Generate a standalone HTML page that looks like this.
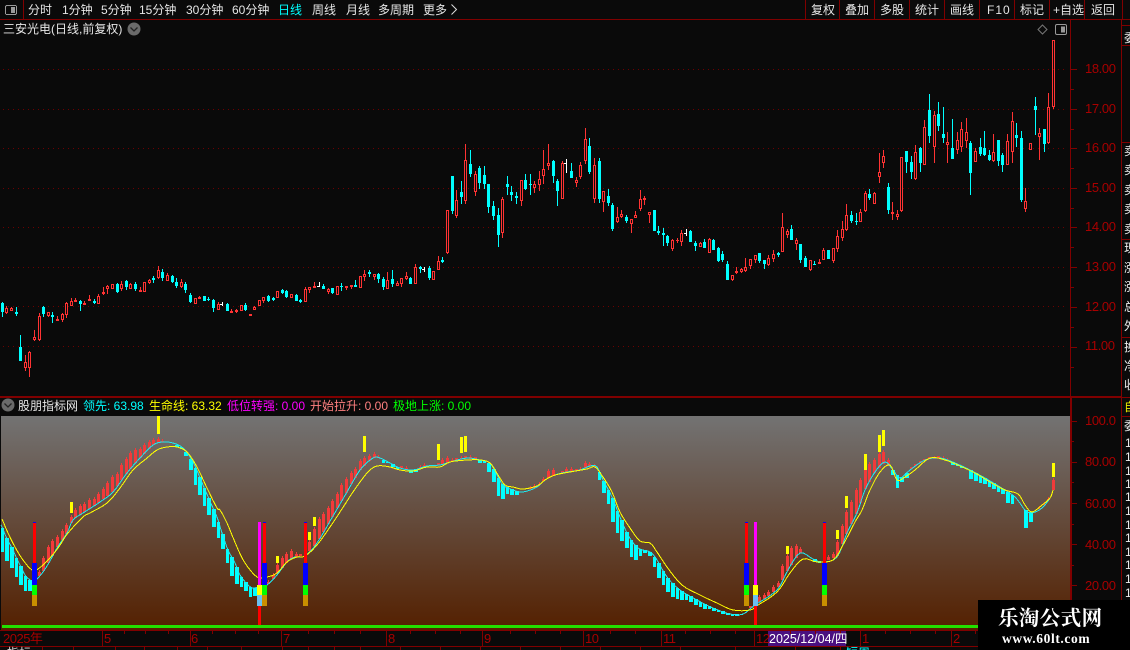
<!DOCTYPE html>
<html lang="zh">
<head>
<meta charset="utf-8">
<title>三安光电</title>
<style>
html,body{margin:0;padding:0;background:#0a0a0a;}
#p{position:relative;width:1130px;height:650px;overflow:hidden;background:#0a0a0a;font-family:"Liberation Sans","WenQuanYi Zen Hei","Noto Sans CJK SC",sans-serif;font-size:12px;color:#e6e6e6;}
#p svg{position:absolute;left:0;top:0;}
#p span{position:absolute;white-space:nowrap;line-height:14px;}
.ax{color:#a80000;font-size:13px;letter-spacing:-.4px;left:1085px;}
.rc{left:1124px;color:#eee;width:6px;overflow:hidden;}
.t{color:#a80000;top:632px;font-size:13px;letter-spacing:-.5px;}
.tb{top:3px;}
</style>
</head>
<body>
<div id="p">
<svg width="1130" height="650" viewBox="0 0 1130 650" shape-rendering="crispEdges">
<defs>
<linearGradient id="g" x1="0" y1="0" x2="0" y2="1"><stop offset="0" stop-color="#737373"/><stop offset="1" stop-color="#542000"/></linearGradient>
</defs>
<rect x="1" y="416" width="1069" height="214" fill="url(#g)"/>
<g fill="#800000" id="frame">
<rect x="0" y="19" width="1130" height="1"/>
<rect x="23" y="0" width="1" height="19"/>
<rect x="805" y="0" width="1" height="19"/><rect x="839" y="0" width="1" height="19"/><rect x="874" y="0" width="1" height="19"/><rect x="909" y="0" width="1" height="19"/><rect x="944" y="0" width="1" height="19"/><rect x="979" y="0" width="1" height="19"/><rect x="1014" y="0" width="1" height="19"/><rect x="1049" y="0" width="1" height="19"/><rect x="1084" y="0" width="1" height="19"/><rect x="1122" y="0" width="1" height="19"/>
<rect x="1070" y="20" width="1" height="610"/>
<rect x="1121" y="20" width="1" height="610"/>
<rect x="0" y="396" width="1122" height="2"/>
<rect x="1070" y="396" width="2" height="234"/>
<rect x="1122" y="25" width="8" height="1"/><rect x="1122" y="45" width="8" height="1"/><rect x="1122" y="142" width="8" height="1"/><rect x="1122" y="239" width="8" height="1"/><rect x="1122" y="337" width="8" height="1"/><rect x="1122" y="397" width="8" height="1"/><rect x="1122" y="416" width="8" height="1"/>
<rect x="0" y="630" width="1070" height="1"/>
<rect x="0" y="646" width="1130" height="1"/>
</g>
<g id="grid" stroke="#6e0000" stroke-width="1" stroke-dasharray="1 4">
<path d="M3 69.5H1068M3 109.5H1068M3 148.5H1068M3 188.5H1068M3 227.5H1068M3 267.5H1068M3 306.5H1068M3 346.5H1068" fill="none"/>
</g>
<path id="ticks" fill="#800000" d=""/>
<path id="redC" fill="#ff3333" fill-rule="evenodd" d=""/>
<path id="cyanC" fill="#00ffff" d=""/>
<path id="whiteC" fill="#ffffff" d=""/>
<path id="barR" fill="#f23a3a" d=""/>
<path id="barC" fill="#00ffff" d=""/>
<polyline id="lc" fill="none" stroke="#1fe8f0" stroke-width="1" points=""/>
<polyline id="ly" fill="none" stroke="#ffff00" stroke-width="1" points=""/>
<path id="mk" fill="#ffff00" d=""/>
<g id="cols"></g>
<rect x="2" y="625" width="976" height="3" fill="#22e000"/>
<rect x="768" y="631" width="78" height="15" fill="#4a1080"/>
<path id="tt" fill="#800000" d=""/>
<!-- toolbar icon -->
<rect x="5.5" y="5.5" width="11" height="9" rx="1.5" fill="none" stroke="#9a9a9a"/>
<rect x="11" y="7" width="4" height="6" fill="#9a9a9a"/>
<!-- top right icons -->
<g shape-rendering="auto">
<path d="M1042.5 25l4.5 4.5-4.5 4.5-4.5-4.5z" fill="none" stroke="#777"/>
<rect x="1055.5" y="24.5" width="11" height="10" rx="1.5" fill="none" stroke="#999"/>
<rect x="1061" y="26.5" width="4" height="6" fill="#999"/>
<circle cx="134" cy="29" r="6.5" fill="#6a6a6a"/>
<path d="M130.5 27.5l3.5 3.5 3.5-3.5" fill="none" stroke="#222" stroke-width="1.3"/>
<circle cx="8" cy="405" r="6.5" fill="#6a6a6a"/>
<path d="M4.5 403.5l3.5 3.5 3.5-3.5" fill="none" stroke="#222" stroke-width="1.3"/>
<path d="M451.5 4.5l5 5-5 5" fill="none" stroke="#ddd" stroke-width="1"/>
</g>
</svg>

<span class="tb" style="left:28px">分时</span>
<span class="tb" style="left:62px">1分钟</span>
<span class="tb" style="left:101px">5分钟</span>
<span class="tb" style="left:139px">15分钟</span>
<span class="tb" style="left:186px">30分钟</span>
<span class="tb" style="left:232px">60分钟</span>
<span class="tb" style="left:278px;color:#00ffff">日线</span>
<span class="tb" style="left:312px">周线</span>
<span class="tb" style="left:346px">月线</span>
<span class="tb" style="left:378px">多周期</span>
<span class="tb" style="left:423px">更多</span>
<span class="tb" style="left:811px">复权</span>
<span class="tb" style="left:845px">叠加</span>
<span class="tb" style="left:880px">多股</span>
<span class="tb" style="left:915px">统计</span>
<span class="tb" style="left:950px">画线</span>
<span class="tb" style="left:987px;letter-spacing:1px">F10</span>
<span class="tb" style="left:1020px">标记</span>
<span class="tb" style="left:1053px">+自选</span>
<span class="tb" style="left:1091px">返回</span>

<span style="left:3px;top:22px">三安光电(日线,前复权)</span>

<span class="ax" style="top:62px">18.00</span>
<span class="ax" style="top:102px">17.00</span>
<span class="ax" style="top:141px">16.00</span>
<span class="ax" style="top:181px">15.00</span>
<span class="ax" style="top:220px">14.00</span>
<span class="ax" style="top:260px">13.00</span>
<span class="ax" style="top:300px">12.00</span>
<span class="ax" style="top:339px">11.00</span>
<span class="ax" style="top:414px">100.0</span>
<span class="ax" style="top:455px">80.00</span>
<span class="ax" style="top:497px">60.00</span>
<span class="ax" style="top:538px">40.00</span>
<span class="ax" style="top:579px">20.00</span>

<span class="rc" style="top:31px">委</span>
<span class="rc" style="top:144px">卖</span><span class="rc" style="top:163px">卖</span><span class="rc" style="top:183px">卖</span><span class="rc" style="top:202px">卖</span><span class="rc" style="top:222px">卖</span>
<span class="rc" style="top:241px">现</span><span class="rc" style="top:261px">涨</span><span class="rc" style="top:280px">涨</span><span class="rc" style="top:300px">总</span><span class="rc" style="top:319px">外</span>
<span class="rc" style="top:340px">换</span><span class="rc" style="top:359px">净</span><span class="rc" style="top:378px">收</span>
<span class="rc" style="top:400px;color:#e6e600">自</span>
<span class="rc" style="top:419px">委</span>
<span class="rc" style="top:436px;left:1125px">1</span><span class="rc" style="top:450px;left:1125px">1</span><span class="rc" style="top:464px;left:1125px">1</span><span class="rc" style="top:477px;left:1125px">1</span><span class="rc" style="top:490px;left:1125px">1</span><span class="rc" style="top:504px;left:1125px">1</span><span class="rc" style="top:518px;left:1125px">1</span><span class="rc" style="top:531px;left:1125px">1</span><span class="rc" style="top:545px;left:1125px">1</span><span class="rc" style="top:558px;left:1125px">1</span><span class="rc" style="top:572px;left:1125px">1</span><span class="rc" style="top:586px;left:1125px">1</span>

<span style="left:18px;top:399px">股朋指标网</span>
<span style="left:83px;top:399px;color:#00ffff">领先: 63.98</span>
<span style="left:149px;top:399px;color:#ffff00">生命线: 63.32</span>
<span style="left:227px;top:399px;color:#ff00ff">低位转强: 0.00</span>
<span style="left:310px;top:399px;color:#ff8080">开始拉升: 0.00</span>
<span style="left:393px;top:399px;color:#00ff00">极地上涨: 0.00</span>

<span class="t" style="left:3px">2025年</span>
<span class="t" style="left:104px">5</span>
<span class="t" style="left:191px">6</span>
<span class="t" style="left:283px">7</span>
<span class="t" style="left:388px">8</span>
<span class="t" style="left:484px">9</span>
<span class="t" style="left:585px">10</span>
<span class="t" style="left:663px">11</span>
<span class="t" style="left:756px">12</span>
<span style="left:769px;top:632px;font-size:12.5px;color:#fff">2025/12/04/四</span>
<span class="t" style="left:862px">1</span>
<span class="t" style="left:953px">2</span>
<span style="left:7px;top:646px;color:#ddd;height:4px;overflow:hidden">指标</span>
<span style="left:50px;top:646px;color:#ddd;height:4px;overflow:hidden">一</span>
<span style="left:826px;top:646px;color:#ddd;height:4px;overflow:hidden">一</span>
<span style="left:846px;top:646px;color:#00ffff;height:4px;overflow:hidden">短周</span>

<div style="position:absolute;left:978px;top:600px;width:152px;height:50px;background:#000;"></div>
<span style="left:998px;top:608px;line-height:22px;font-family:'Liberation Serif','Noto Serif CJK SC',serif;font-weight:bold;font-size:20.5px;letter-spacing:.4px;color:#fff">乐淘公式网</span>
<span style="left:1002px;top:632px;line-height:14px;font-family:'Liberation Serif',serif;font-weight:bold;font-size:13.5px;letter-spacing:.6px;color:#fff">www.60lt.com</span>
</div>

<script>
(function(){
var segs=[
[280,0,"c66,70,96,110 r78,85,100,103 r82,84,92,94 c82,96,103,108 c165,201,243,243 r225,247,263,273 r213,216,263,291 r150,172,180,183 r98,108,179,183 c79,82,102,110 r96,97,108,111 c96,105,112,129 r108,117,122,122 r100,103,120,125 r66,70,104,113 r54,64,77,78 r54,60,65,65 c59,62,72,93 r63,69,75,75 r45,57,63,63 c57,62,69,72 r42,48,71,71 r21,37,43,45 r15,19,26,42 r12,13,26,27 c10,12,36,39 r3,12,26,33 c0,3,20,30 r8,12,26,28 c6,12,27,33 r21,29,35,36 r6,7,35,36 r-3,0,9,12 c-12,-6,0,9 r-42,-30,-6,-3 c-33,-24,-6,3 r-21,-15,3,3 c-15,-12,6,9 c-6,6,18,24 r-3,7,21,24 c6,12,30,39 c40,45,66,69 r54,54,72,72 r48,51,57,57 c48,48,63,63 c51,56,60,63 c57,60,84,96 r66,72,90,90 w66,72,72,78 c69,72,93,93 r87,93,99,99 r87,90,96,99 r75,76,93,93 c69,75,90,93 r102,102,108,108"],
[240,55,"r198,200,210,210 r180,181,197,197 r170,172,183,189 c165,168,184,186 c171,174,180,183 r153,154,173,173 c147,151,160,163 c150,153,171,175 r163,163,173,174 c162,165,183,183 c176,179,187,190 r141,148,185,185 r141,142,150,160 r126,139,143,144 w126,139,140,141 c132,138,147,147 r143,147,155,162 c143,144,158,162 r139,139,164,164 c130,137,142,153 r138,139,145,150 r135,136,141,147 c120,135,140,140 r109,109,143,143 r90,103,110,123 c90,96,103,111 r102,103,110,120 c98,102,117,129 c110,118,140,150 r96,121,147,147 c90,118,132,141 r124,129,137,138 r114,115,131,141 r96,109,117,120 c112,114,131,132 r72,82,131,131 c78,82,88,99 w81,88,88,96 c78,84,113,120 r94,94,119,119 r48,64,89,89 c52,59,66,70"],
[130,97,"r240,241,368,372 c138,138,243,252 r180,211,257,263 c153,186,201,222 r42,91,212,222 c60,102,132,141 r124,133,185,198 c109,114,159,177 c108,135,162,177 c162,162,231,249 c213,228,258,270 c234,255,315,351 r201,207,308,324 c138,162,171,195 c168,186,195,213 c186,198,204,222 r150,150,212,228 c132,150,177,180 c132,162,165,195 r153,162,174,189 r123,147,165,183 r60,117,138,162 r42,99,108,120 c90,93,138,159 c147,153,183,228 r93,99,207,207 w87,100,100,129 c99,123,144,144 r141,150,159,171 r96,105,141,147 r-6,27,93,102 c24,48,126,132 r84,105,207,219 c84,93,207,219 r183,183,216,246 c177,198,219,228 c219,225,297,303 r231,261,276,279 r240,252,261,264 c255,261,273,279 r267,267,282,309 r243,255,264,264 r180,207,237,243 r198,204,210,225 r246,246,255,279 c240,240,303,303 c288,303,309,315 c294,309,315,348 c315,318,339,348 r327,330,357,362 r324,330,333,339"],
[130,148,"r300,310,335,347 w297,310,310,318 c300,303,336,336 c333,339,348,362 r336,339,351,352 c327,336,354,354 r324,327,369,369 c327,330,360,360 c351,354,393,396 c363,372,390,396 c393,402,450,450 r435,435,450,453 r411,423,429,432 r414,417,426,429 r384,411,423,426 r387,387,408,417 r375,375,390,399 c369,369,393,399 c390,390,402,417 r375,384,405,408 r360,372,387,396 c366,369,375,381 r249,291,366,366 r297,303,315,324 c285,297,330,330 r324,330,342,360 c342,342,390,399 c378,384,411,411 r390,390,420,423 c393,402,405,405 r387,396,402,402 r354,360,390,390 c360,360,387,387 r354,354,393,399 r300,318,357,366 r273,297,324,333 r222,255,300,303 c243,255,273,279 c249,273,276,285 r237,246,276,276 r183,189,243,246 c177,192,204,210 r186,189,222,222"],
[90,191,"r189,246,261,279 r180,198,219,234 c279,291,360,372 r336,366,372,390 r360,372,381,390 r201,201,363,366 c183,183,216,249 c198,216,246,267 r165,186,267,270 c171,174,219,246 r90,111,225,225 c12,60,138,159 r63,75,171,219 c36,72,108,123 c51,132,144,159 r126,156,165,219 c87,174,207,207 r126,150,180,192 r96,117,171,186 r84,126,153,174 c153,159,249,315 r174,183,216,216 c144,171,192,198 c123,174,195,198 c180,195,210,213 r132,186,213,216 c150,150,213,228 c189,195,225,246 r132,153,225,225 r66,93,186,219 c99,135,144,171 c123,144,330,336 r294,333,357,366 r159,159,180,180 c21,48,60,135 r114,129,141,210 c117,117,162,186 r9,51,159,162 r-150,-150,51,57"]
];
function X(i){return Math.floor(2.33+4.59*i);}
var dR="",dC="",dW="";
segs.forEach(function(s){
 var off=s[0],i=s[1];
 s[2].split(" ").forEach(function(e){
  var ty=e[0],v=e.slice(1).split(",").map(function(n){return Math.round(off+parseFloat(n)/3);});
  var x=X(i),h=v[0],t=v[1],b=v[2],l=v[3],H=Math.max(b-t,1);
  var w=(t>h?"M"+x+" "+h+"h1v"+(t-h)+"h-1z":"")+(l>t+H?"M"+x+" "+(t+H)+"h1v"+(l-t-H)+"h-1z":"");
  if(ty=="r"){
    dR+="M"+(x-1)+" "+t+"h3v"+H+"h-3z";
    if(H>=3)dR+="M"+x+" "+(t+1)+"h1v"+(H-2)+"h-1z";
    dR+=w;
  }else if(ty=="c"){
    dC+="M"+(x-1)+" "+t+"h3v"+H+"h-3z"+w;
  }else{
    dW+="M"+x+" "+h+"h1v"+(l-h)+"h-1zM"+(x-2)+" "+t+"h2v1h-2z";
  }
  i++;
 });
});
document.getElementById("redC").setAttribute("d",dR);
document.getElementById("cyanC").setAttribute("d",dC);
document.getElementById("whiteC").setAttribute("d",dW);

var lead=[[1,525],[2,527],[7,539],[12,548],[16,557],[21,567],[25,575],[30,580],[34,582],[37,579],[43,572],[50,561],[57,548],[67,533],[73,520],[83,513],[100,502],[113,492],[127,473],[140,458],[153,445],[163,442],[173,443],[183,448],[193,462],[203,485],[213,508],[217,517],[222,533],[228,550],[235,563],[240,575],[248,585],[253,588],[258,587],[267,585],[277,575],[287,562],[295,557],[305,556],[317,543],[333,516],[347,492],[360,470],[373,458],[380,458],[390,463],[400,468],[413,470],[427,466],[440,465],[450,462],[467,458],[480,460],[490,463],[497,475],[503,485],[513,490],[523,492],[537,487],[545,480],[555,475],[567,472],[580,470],[590,466],[597,467],[603,480],[612,497],[620,517],[628,535],[638,548],[650,552],[657,560],[667,577],[680,590],[697,600],[713,608],[730,614],[743,614],[755,605],[777,590],[788,570],[800,553],[813,559],[823,562],[837,557],[847,533],[857,513],[865,490],[875,472],[885,462],[893,470],[900,478],[910,470],[925,460],[940,458],[955,463],[970,470],[985,478],[1000,487],[1015,497],[1025,510],[1032,513],[1042,508],[1050,498],[1053,490]];
var yel=[[2,519],[8,533],[15,547],[23,560],[32,570],[38,569],[48,560],[58,548],[68,533],[83,517],[90,513],[107,503],[120,488],[133,470],[147,458],[157,450],[167,447],[177,447],[187,452],[197,467],[207,488],[217,508],[220,510],[227,523],[237,547],[245,563],[257,577],[267,577],[277,573],[287,562],[297,557],[305,556],[317,545],[330,527],[340,512],[353,492],[367,473],[377,466],[390,467],[400,470],[413,471],[427,467],[440,467],[450,462],[467,460],[480,460],[490,463],[498,475],[505,485],[513,487],[523,489],[537,486],[545,480],[555,475],[570,472],[587,469],[595,467],[603,477],[612,492],[620,512],[630,528],[640,541],[650,543],[657,552],[667,567],[682,585],[700,595],[717,603],[733,610],[750,610],[758,605],[777,592],[790,573],[803,559],[817,562],[833,560],[843,545],[855,522],[862,510],[870,490],[880,472],[890,465],[897,480],[905,477],[915,470],[930,458],[945,460],[960,466],[975,473],[990,482],[1005,490],[1018,494],[1025,505],[1032,512],[1042,505],[1050,498],[1053,490]];
function smooth(a){
 var o=[];
 for(var k=0;k<a.length-1;k++){
  var p0=a[Math.max(k-1,0)],p1=a[k],p2=a[k+1],p3=a[Math.min(k+2,a.length-1)];
  for(var j=0;j<4;j++){
   var t=j/4,t2=t*t,t3=t2*t;
   o.push((.5*(2*p1[0]+(p2[0]-p0[0])*t+(2*p0[0]-5*p1[0]+4*p2[0]-p3[0])*t2+(3*p1[0]-p0[0]-3*p2[0]+p3[0])*t3)).toFixed(1)+","+(.5*(2*p1[1]+(p2[1]-p0[1])*t+(2*p0[1]-5*p1[1]+4*p2[1]-p3[1])*t2+(3*p1[1]-p0[1]-3*p2[1]+p3[1])*t3)).toFixed(1));
  }
 }
 o.push(a[a.length-1].join(","));
 return o.join(" ");
}
document.getElementById("lc").setAttribute("points",smooth(lead));
document.getElementById("ly").setAttribute("points",smooth(yel));
function ly(x){
 for(var k=0;k<lead.length-1;k++){
  if(x>=lead[k][0]&&x<=lead[k+1][0]){
   return lead[k][1]+(lead[k+1][1]-lead[k][1])*(x-lead[k][0])/(lead[k+1][0]-lead[k][0]);
  }
 }
 return lead[lead.length-1][1];
}
var R={8:570,9:556,10:545,11:539,12:535,13:529,14:523,15:515,16:508,17:504,18:502,19:498,20:497,21:492,22:487,23:481,24:475,25:472,26:463,27:457,28:451,29:448,30:447,31:443,32:440,33:438,34:437,35:439,58:580,59:573,60:563,61:556,62:552,63:549,64:552,65:554,67:540,68:527,69:517,70:512,71:506,72:499,73:492,74:483,75:477,76:471,77:467,78:459,79:456,80:454,81:452,82:455,87:466,88:466,91:465,92:463,95:463,96:458,97:456,98:458,99:458,100:456,101:456,102:455,103:457,115:486,116:484,117:482,118:477,119:469,120:468,121:474,122:471,123:467,124:467,125:469,126:467,127:461,128:462,129:464,163:606,165:595,166:593,167:590,168:585,169:581,170:564,171:554,172:546,173:544,174:547,180:555,181:552,182:540,183:524,184:510,185:500,186:488,187:478,188:467,189:462,190:458,191:452,192:450,193:458,198:467,199:464,200:461,201:459,202:457,203:456,204:456,205:456,206:458,226:506,227:502,228:497,229:478};
var C={0:552,1:561,2:568,3:577,4:585,5:591,6:591,38:447,39:449,40:456,41:470,42:485,43:495,44:506,45:515,46:527,47:538,48:549,49:563,50:576,51:584,52:587,53:591,54:597,55:596,83:463,84:463,85:467,86:469,89:473,90:472,104:463,105:463,106:472,107:482,108:496,109:499,110:494,111:495,112:495,113:492,114:491,130:480,131:493,132:504,133:522,134:533,135:541,136:548,137:557,138:560,139:556,140:553,141:556,142:567,143:578,144:585,145:592,146:597,147:599,148:600,149:600,150:602,151:605,152:607,153:609,154:609,155:611,156:612,157:614,158:615,159:616,160:616,161:615,177:562,178:563,194:475,195:488,196:482,197:478,207:465,208:466,209:468,210:469,211:479,212:481,213:483,214:484,215:487,216:489,217:492,218:494,219:503,220:504,221:498,222:505,223:528,224:522};
var dbr="",dbc="",k;
for(k in R){
 var x=X(+k),t=R[k],b=Math.round(ly(x+.5));
 if(b>t+2)dbr+="M"+x+" "+t+"h1v2h-1zM"+(x-1)+" "+(t+2)+"h3v"+(b-t-2)+"h-3z";
 else if(b>t)dbr+="M"+(x-1)+" "+t+"h3v"+(b-t)+"h-3z";
}
for(k in C){
 var x2=X(+k),y2=Math.round(ly(x2+.5)),wd=X(+k+1)-x2-1;
 if(C[k]>y2)dbc+="M"+(x2-1)+" "+y2+"h"+wd+"v"+(C[k]-y2)+"h-"+wd+"z";
}
document.getElementById("barR").setAttribute("d",dbr);
document.getElementById("barC").setAttribute("d",dbc);
var M=[[15,502,513],[34,416,434],[60,556,563],[67,532,540],[68,517,526],[79,436,452],[95,444,460],[100,437,453],[101,436,452],[171,546,554],[182,530,539],[184,496,508],[188,454,470],[191,435,452],[192,430,446],[229,463,477]];
var dm="";M.forEach(function(m){var x=X(m[0]);dm+="M"+(x-1)+" "+m[1]+"h3v"+(m[2]-m[1])+"h-3z";});
document.getElementById("mk").setAttribute("d",dm);
function r(x,y,w,h,c){return '<rect x="'+x+'" y="'+y+'" width="'+w+'" height="'+h+'" fill="'+c+'"/>';}
var cols="";
[34,264,305,746,824].forEach(function(x){
 cols+=r(x-1,522,3,41,"#ff0000")+r(x-1,522,3,1,"#0000ff")+r(x-2,563,5,22,"#0000ff")+r(x-2,585,5,10,"#00ff00")+r(x-2,595,5,11,"#c89000");
});
[259,755].forEach(function(x){
 cols+=r(x-1,522,3,63,"#ff00ff")+r(x-2,585,5,10,"#ffff00")+r(x-2,595,5,11,"#6ac0f0")+r(x-1,606,3,22,"#ff0000");
});
document.getElementById("cols").innerHTML=cols;
var tk="";
[69,109,148,188,227,267,307,347].forEach(function(y){tk+="M1071 "+y+"h6v1h-6z";});
[89,129,168,208,247,287,327,367].forEach(function(y){tk+="M1071 "+y+"h3v1h-3z";});
[421,462,503,544,585].forEach(function(y){tk+="M1071 "+y+"h6v1h-6z";});
[441,482,524,565,606].forEach(function(y){tk+="M1071 "+y+"h3v1h-3z";});
document.getElementById("ticks").setAttribute("d",tk);
var tt="";
[102,190,281,386,482,583,661,754,860,951].forEach(function(x){tt+="M"+x+" 631h1v15h-1z";});
[124,145,168,212,235,258,308,334,360,410,435,460,510,535,560,610,635,685,710,735,790,815,840,885,910,935,975].forEach(function(x){tt+="M"+x+" 631h1v3h-1z";});
[42,73,115,144,177,207,241,282,308,334,360,400,440,480,520,560,600,640,680,735,795,840].forEach(function(x){tt+="M"+x+" 647h1v3h-1z";});
document.getElementById("tt").setAttribute("d",tt);
})();
</script>
</body>
</html>
